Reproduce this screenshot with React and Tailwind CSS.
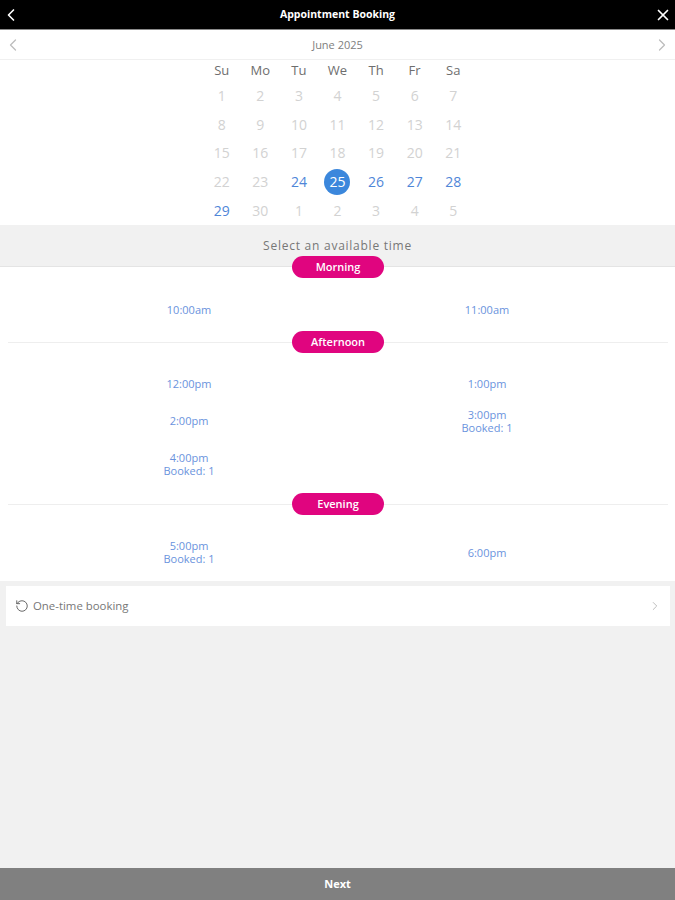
import { ChevronLeft, ChevronRight, X, RotateCcw } from 'lucide-react';

const font = { fontFamily: '"Open Sans", sans-serif' };

const weekdays = ['Su', 'Mo', 'Tu', 'We', 'Th', 'Fr', 'Sa'];

const weeks = [
  [1, 2, 3, 4, 5, 6, 7],
  [8, 9, 10, 11, 12, 13, 14],
  [15, 16, 17, 18, 19, 20, 21],
  [22, 23, 24, 25, 26, 27, 28],
  [29, 30, 1, 2, 3, 4, 5],
];

const availableDays = [24, 26, 27, 28, 29];

const sections = [
  {
    label: 'Morning',
    pad: 'pt-[23px] pb-[15px]',
    rows: [{ h: 'h-[36px]', slots: [{ time: '10:00am' }, { time: '11:00am' }] }],
  },
  {
    label: 'Afternoon',
    pad: 'pt-[22px] pb-[15px]',
    rows: [
      { h: 'h-[37px]', slots: [{ time: '12:00pm' }, { time: '1:00pm' }] },
      { h: 'h-[37px]', slots: [{ time: '2:00pm' }, { time: '3:00pm', booked: 1 }] },
      { h: 'h-[50px]', slots: [{ time: '4:00pm', booked: 1 }, null] },
    ],
  },
  {
    label: 'Evening',
    pad: 'pt-[23px] pb-[5px]',
    rows: [{ h: 'h-[48px]', slots: [{ time: '5:00pm', booked: 1 }, { time: '6:00pm' }] }],
  },
];

function DayCell({ day, week }) {
  const outside = week === 4 && day < 10;
  const selected = day === 25;
  const available = !outside && availableDays.includes(day);
  return (
    <div className="flex h-[28.8px] items-center justify-center">
      {selected ? (
        <span className="flex h-[26px] w-[26px] items-center justify-center rounded-full bg-[#3b87dc] text-[14px] text-white">
          {day}
        </span>
      ) : (
        <span className={available ? 'text-[14px] text-[#4f86d8]' : 'text-[14px] text-[#d2d2d2]'}>{day}</span>
      )}
    </div>
  );
}

function Pill({ label }) {
  return (
    <div className="flex h-[22px] w-[92px] items-center justify-center rounded-full bg-[#e0057f] text-[11px] font-semibold text-white">
      {label}
    </div>
  );
}

function Slot({ slot }) {
  if (!slot) return <div />;
  return (
    <div className="flex flex-col items-center text-[11px] leading-[13px] text-[#6a93dd]">
      <span>{slot.time}</span>
      {slot.booked && <span>Booked: {slot.booked}</span>}
    </div>
  );
}

export default function App() {
  return (
    <div style={font} className="flex h-[900px] w-[675px] flex-col bg-[#f1f1f1]">
      <header className="flex h-[30px] shrink-0 items-center justify-between border-b border-[#8a8a8a] bg-black pl-px pr-[3px] text-white">
        <ChevronLeft className="h-5 w-5" strokeWidth={2} />
        <span className="text-[10.5px] font-bold">Appointment Booking</span>
        <X className="h-[18px] w-[18px]" strokeWidth={2.25} />
      </header>

      <div className="flex h-[30px] shrink-0 items-center justify-between border-b border-[#f0f0f0] bg-white px-[3px] pt-px text-[#bdbdbd]">
        <ChevronLeft className="h-5 w-5" strokeWidth={1.5} />
        <span className="text-[11px] text-[#808080]">June 2025</span>
        <ChevronRight className="h-5 w-5" strokeWidth={1.5} />
      </div>

      <div className="flex h-[165px] shrink-0 justify-center bg-white">
        <div className="w-[270px]">
          <div className="grid h-[21px] grid-cols-7 items-center pt-px text-center text-[13px] text-[#6e6e6e]">
            {weekdays.map((d) => (
              <span key={d}>{d}</span>
            ))}
          </div>
          {weeks.map((week, i) => (
            <div key={i} className="grid grid-cols-7">
              {week.map((day) => (
                <DayCell key={day} day={day} week={i} />
              ))}
            </div>
          ))}
        </div>
      </div>

      <div className="flex h-[42px] shrink-0 items-center justify-center border-b border-[#e4e4e4] pt-px text-[12px] tracking-[0.75px] text-[#777777]">
        Select an available time
      </div>

      <div className="h-[314px] shrink-0 bg-white pl-2 pr-[7px]">
        {sections.map((section, i) => (
          <section key={section.label}>
            <div className={i === 0 ? 'relative h-px' : 'relative h-px bg-[#eeeeee]'}>
              <div className="absolute left-0 right-0 top-[-11px] flex justify-center">
                <Pill label={section.label} />
              </div>
            </div>
            <div className={`px-8 ${section.pad}`}>
              {section.rows.map((row, j) => (
                <div key={j} className={`grid grid-cols-2 items-center ${row.h}`}>
                  {row.slots.map((slot, k) => (
                    <Slot key={k} slot={slot} />
                  ))}
                </div>
              ))}
            </div>
          </section>
        ))}
      </div>

      <div className="ml-[6px] mr-[5px] mt-[5px] flex h-[40px] shrink-0 items-center justify-between bg-white pl-[9px] pr-[8px]">
        <div className="flex items-center gap-[4px] text-[11.4px] text-[#777777]">
          <RotateCcw className="h-[14px] w-[14px] text-[#555555]" strokeWidth={1.5} />
          <span>One-time booking</span>
        </div>
        <ChevronRight className="h-[14px] w-[14px] text-[#b5b5b5]" strokeWidth={1.5} />
      </div>

      <div className="flex-1" />

      <div className="flex h-[32px] shrink-0 items-center justify-center bg-[#808080] text-[11px] font-bold text-white">
        Next
      </div>
    </div>
  );
}
